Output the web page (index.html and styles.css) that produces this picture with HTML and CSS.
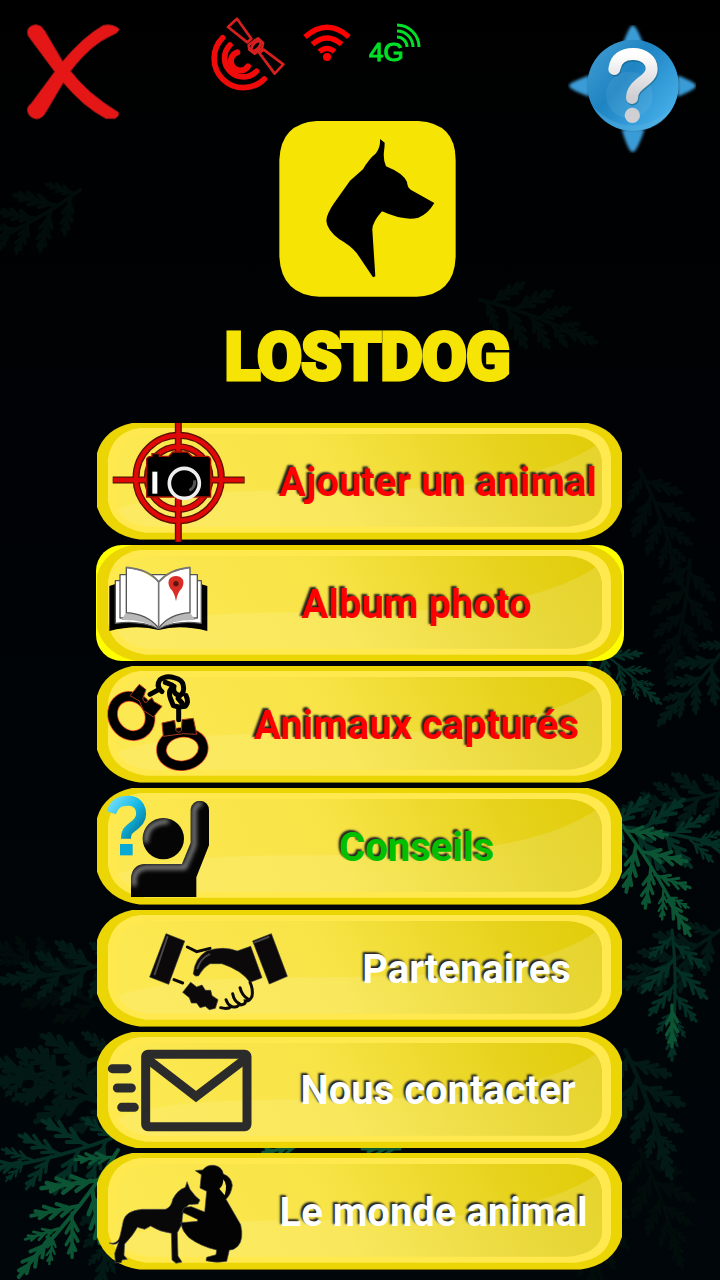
FILE: index.html
```html
<!DOCTYPE html>
<html lang="fr">
<head>
<meta charset="utf-8">
<meta name="viewport" content="width=device-width, initial-scale=1">
<title>LostDog</title>
<link rel="stylesheet" href="styles.css">
</head>
<body>
<svg class="foliage" viewBox="0 0 720 1280" preserveAspectRatio="xMidYMid slice" aria-hidden="true">
  <defs>
    <g id="twig"><path d="M0 0V38M0 8l-5 9M0 6l5 9M0 18l-5 9M0 15l5 9M0 27l-3 7M0 25l3 7"/></g>
    <g id="frond">
      <path d="M0 0Q6 50 0 110"/>
      <use href="#twig" transform="translate(1 6) rotate(48) scale(.8)"/>
      <use href="#twig" transform="translate(1 12) rotate(-52)"/>
      <use href="#twig" transform="translate(2 28) rotate(44) scale(1.15)"/>
      <use href="#twig" transform="translate(3 36) rotate(-46) scale(1.1)"/>
      <use href="#twig" transform="translate(3 52) rotate(40)"/>
      <use href="#twig" transform="translate(2 60) rotate(-38) scale(.9)"/>
      <use href="#twig" transform="translate(1 76) rotate(34) scale(.7)"/>
      <use href="#twig" transform="translate(1 82) rotate(-30) scale(.6)"/>
      <use href="#twig" transform="translate(0 86)"/>
    </g>
  </defs>
  <g fill="none" stroke-width="4" stroke-linecap="round">
    <g stroke="#010c0b">
      <use href="#frond" transform="translate(80 190) rotate(60)"/>
      <use href="#frond" transform="translate(480 300) rotate(-70)"/>
      <use href="#frond" transform="translate(640 470) rotate(-20)"/>
      <use href="#frond" transform="translate(690 560) rotate(10)"/>
      <use href="#frond" transform="translate(110 1010) rotate(120) scale(1.2)"/>
      <use href="#frond" transform="translate(640 1150) rotate(-20)"/>
      <use href="#frond" transform="translate(600 1180) rotate(5)"/>
    </g>
    <g stroke="#021915">
      <use href="#frond" transform="translate(730 640) rotate(40) scale(.9)"/>
      <use href="#frond" transform="translate(730 790) rotate(80) scale(.9)"/>
      <use href="#frond" transform="translate(120 960) rotate(80)"/>
      <use href="#frond" transform="translate(120 1050) rotate(75) scale(1.2)"/>
      <use href="#frond" transform="translate(130 1110) rotate(110) scale(1.3)"/>
      <use href="#frond" transform="translate(120 1170) rotate(10)"/>
      <use href="#frond" transform="translate(625 1050) rotate(-20) scale(1.1)"/>
      <use href="#frond" transform="translate(720 930) rotate(60)"/>
    </g>
    <g stroke="#042f25" stroke-width="3">
      <use href="#frond" transform="translate(585 640) rotate(-50) scale(.8)"/>
      <use href="#frond" transform="translate(600 825) rotate(-80) scale(1.2)"/>
      <use href="#frond" transform="translate(120 1135) rotate(75) scale(1.2)"/>
      <use href="#frond" transform="translate(672 930) rotate(0) scale(1.05)"/>
    </g>
    <g stroke="#0b5434" stroke-width="3">
      <use href="#frond" transform="translate(618 820) rotate(-32) scale(1.1)"/>
      <use href="#frond" transform="translate(118 1150) rotate(38) scale(1.3)"/>
      <use href="#twig" transform="translate(672 1005) scale(1.1)"/>
      <use href="#twig" transform="translate(300 1146) rotate(80)"/>
      <use href="#twig" transform="translate(400 1149) rotate(90)"/>
    </g>
  </g>
</svg>

<svg class="defs" aria-hidden="true">
  <defs>
    <linearGradient id="face" x1="0" y1=".1" x2="1" y2="0">
      <stop offset="0" stop-color="#fce850"/><stop offset=".4" stop-color="#f8e447"/>
      <stop offset=".85" stop-color="#e4d016"/><stop offset="1" stop-color="#e2cc08"/>
    </linearGradient>
    <linearGradient id="gloss" x1="0" x2="1">
      <stop offset="0" stop-color="#fff" stop-opacity=".1"/><stop offset="1" stop-color="#fff" stop-opacity=".14"/>
    </linearGradient>
    <linearGradient id="cyan" x1="0" y1="0" x2="1" y2="1">
      <stop offset="0" stop-color="#6fdcf8"/><stop offset=".5" stop-color="#12b9e4"/><stop offset="1" stop-color="#056c8c"/>
    </linearGradient>
    <filter id="soften"><feGaussianBlur stdDeviation="6"/></filter>
    <clipPath id="pupil"><circle cx="220" cy="164" r="62"/><path d="M123 339V282Q126 244 162 240H276L302 176V76Q306 50 332 50Q356 54 357 78V184L319 280V339Z"/></clipPath>
    <symbol id="plate" viewBox="0 0 528 117" preserveAspectRatio="none">
      <path d="M36 0H492Q520 6 526 30V84Q518 112 484 117H44Q10 112 1 84V30Q8 6 36 0Z" fill="#ecd504"/>
      <path d="M44 5H482Q514 9 515 36V82Q512 106 480 110H50Q16 105 12 78V36Q16 9 44 5Z" fill="#ffe94f"/>
      <path d="M50 11H472Q504 14 506 38V80Q504 101 472 104H54Q22 100 20 76V38Q24 14 50 11Z" fill="url(#face)"/>
      <path d="M22 86C90 62 190 70 310 66Q440 62 500 22Q506 28 506 38V80Q504 101 472 104H54Q28 102 22 86Z" fill="url(#gloss)"/>
    </symbol>
  </defs>
</svg>

<main class="screen">
  <header class="top">
    <button class="icon-button close" type="button" aria-label="Quitter">
      <svg width="98" height="100" viewBox="72 66 294 300">
        <path d="M82 96Q84 76 108 74Q124 74 134 92L188 184Q250 110 310 76Q340 70 358 88Q354 100 336 106Q272 134 212 213Q262 280 354 336Q362 346 344 356H318Q250 320 190 248L138 336Q126 358 108 357Q84 352 82 330Q82 318 94 310L164 215L92 118Q82 108 82 96Z" fill="#e41616" stroke="#8b1515" stroke-width="3"/>
      </svg>
    </button>
    <div class="brand">
      <div class="status">
        <svg width="75" height="76" viewBox="630 50 225 228" role="img" aria-label="Satellite">
          <g fill="none" stroke="#f00b0b" stroke-linecap="round">
            <path d="M668 112A82 82 0 1 0 793 236M690 134A53 53 0 1 0 770 213" stroke-width="17"/>
            <path d="M712 156A28 28 0 1 0 744 198" stroke-width="18"/>
            <g stroke="#d81f1f" stroke-width="8" stroke-linejoin="round"><path d="M684 80L711 55L754 115L742 126ZM778 158L791 148L850 192L824 220Z"/><path d="M748 148L746 134L774 114L789 128L786 142L764 160Z"/><ellipse cx="768" cy="137" rx="9" ry="18" transform="rotate(42 768 137)"/></g>
          </g>
        </svg>
        <svg class="signal" width="48" height="39" viewBox="908 70 144 117" role="img" aria-label="Wi-Fi">
          <g fill="none" stroke="#f00" stroke-width="16"><path d="M914 112Q980 54 1046 112M936 134Q980 96 1024 134M957 156Q980 137 1003 156"/></g>
          <circle cx="980" cy="172" r="12" fill="#f00"/>
        </svg>
        <svg class="signal" width="56" height="50" viewBox="0 0 56 50" role="img" aria-label="4G">
          <text class="network" x="0" y="38">4G</text>
          <g fill="none" stroke="#00e028" stroke-width="3"><path d="M28 2A22 22 0 0 1 50 24M28 8A16 16 0 0 1 44 24M28 14A10 10 0 0 1 38 24"/></g>
        </svg>
      </div>
      <svg class="tile" width="177" height="176" viewBox="207 33 531 528" aria-hidden="true">
        <path d="M320 33H625Q737 40 737 150V440Q733 554 620 560H328Q214 554 208 440V150Q212 40 320 33Z" fill="#f6e405"/>
        <path d="M510 87L524 98Q524 112 522 124Q519 150 528 169Q580 190 591 216Q592 232 602 239L673 279Q654 312 625 323Q582 334 516 304Q486 338 487 360L496 499L489 502L440 429Q420 406 388 388Q350 358 349 332Q350 312 372 280L420 212L459 178Q476 148 498 130Q512 110 510 87Z" fill="#000"/>
      </svg>
      <h1 class="wordmark">LOSTDOG</h1>
    </div>
    <button class="icon-button help" type="button" aria-label="Aide">
      <svg width="128" height="128" viewBox="81 75 384 384">
        <defs>
          <linearGradient id="orb" x1="0" y1="0" x2="1" y2=".8"><stop offset="0" stop-color="#459fd4"/><stop offset=".45" stop-color="#1e84c2"/><stop offset="1" stop-color="#48b2ec"/></linearGradient>
          <linearGradient id="mark" x1="0" y1="0" x2="0" y2="1"><stop offset="0" stop-color="#fff"/><stop offset="1" stop-color="#cdcdd2"/></linearGradient>
          <filter id="soft"><feGaussianBlur stdDeviation="4"/></filter>
        </defs>
        <path d="M246 130Q266 76 275 76Q286 76 306 130ZM410 226Q465 248 465 257Q465 268 410 290ZM145 226Q84 248 84 257Q84 268 145 290ZM242 388Q262 456 275 457Q288 456 311 388Z" fill="#3a9bd6" filter="url(#soft)"/>
        <circle cx="276" cy="256" r="137" fill="url(#orb)"/>
        <circle cx="265" cy="285" r="70" fill="#fff" opacity=".07"/>
        <path d="M155 320Q270 430 394 324Q360 392 276 393Q200 390 155 320Z" fill="#6bbbe8" opacity=".3"/>
        <path d="M222 211C226 180 248 166 278 166C312 166 334 186 334 210C334 248 276 252 275 298" fill="none" stroke="#033" stroke-width="37" stroke-linecap="round" opacity=".3"/>
        <path d="M220 207C224 176 246 162 276 162C310 162 332 182 332 206C332 244 274 248 273 294" fill="none" stroke="url(#mark)" stroke-width="36" stroke-linecap="round"/>
        <circle cx="274" cy="346" r="23" fill="#cfcfd4"/>
      </svg>
    </button>
  </header>

  <nav class="menu" aria-label="Menu principal">
    <button class="item danger" type="button">
      <svg class="plate"><use href="#plate"/></svg>
      <svg class="icon" width="145" height="101" viewBox="51 48 435 303" aria-hidden="true">
        <g fill="none" stroke="#5c1000" stroke-width="21"><circle cx="266" cy="189" r="128"/><circle cx="266" cy="189" r="94"/><path d="M68 195H464M265 24V380"/></g>
        <g fill="none" stroke="#e00808" stroke-width="13"><circle cx="266" cy="189" r="128"/><circle cx="266" cy="189" r="94"/><path d="M70 195H462M265 24V380"/></g>
        <path d="M170 132Q172 124 186 124V116H208V124H236L248 111H292L306 124H352Q362 126 362 136V246H170Z" fill="#000" stroke="#a81200" stroke-width="4"/>
        <path d="M187 170H202V236H187Z" fill="#fff"/>
        <circle cx="283" cy="205" r="45" fill="#000" stroke="#eee" stroke-width="11"/>
        <path d="M314 196Q316 218 298 226" fill="none" stroke="#555" stroke-width="9"/>
      </svg>
      <span class="label">Ajouter un animal</span>
    </button>
    <button class="item danger selected" type="button" aria-current="true">
      <svg class="plate"><use href="#plate"/></svg>
      <svg class="icon" width="102" height="101" viewBox="51 39 306 303" aria-hidden="true">
        <path d="M58 138L76 132V248H332V132L352 138V273Q270 252 206 270Q140 252 58 273Z" fill="#000"/>
        <g fill="#fff" stroke="#555" stroke-width="4" stroke-linejoin="round">
          <path d="M76 122H334V250Q260 240 206 266Q150 240 76 250Z"/>
          <path d="M90 104H322V234Q250 232 206 266Q160 230 90 234Z"/>
        </g>
        <path d="M109 216Q172 222 206 264Q238 222 300 218L316 240Q250 238 206 266Q160 238 94 240Z" fill="#b9b9b9"/>
        <path d="M109 82Q176 88 206 126Q238 88 300 82V218Q238 222 206 264Q172 222 109 218Z" fill="#fff" stroke="#555" stroke-width="4" stroke-linejoin="round"/>
        <path d="M109 66L206 124L300 66V81Q238 88 206 125Q176 88 109 81Z" fill="#fae64e"/>
        <path d="M109 82Q176 88 206 126Q238 88 300 82M206 126V264" fill="none" stroke="#777" stroke-width="5"/>
        <path d="M258 184Q254 158 240 144C228 120 242 108 258 108S288 120 276 144Q262 158 258 184Z" fill="#d92c24"/><circle cx="258" cy="131" r="8" fill="#5b1512"/>
      </svg>
      <span class="label">Album photo</span>
    </button>
    <button class="item danger" type="button">
      <svg class="plate"><use href="#plate"/></svg>
      <svg class="icon" width="102" height="101" viewBox="51 37 306 303" aria-hidden="true">
        <g fill="none" stroke="#e2512a" stroke-width="32">
          <ellipse cx="124" cy="163" rx="54" ry="61" transform="rotate(-35 124 163)"/><ellipse cx="277" cy="262" rx="63" ry="50" transform="rotate(-8 277 262)"/>
        </g>
        <g fill="none" stroke="#000" stroke-width="27">
          <ellipse cx="124" cy="163" rx="54" ry="61" transform="rotate(-35 124 163)"/><ellipse cx="277" cy="262" rx="63" ry="50" transform="rotate(-8 277 262)"/>
        </g>
        <g fill="#000" stroke="#a53a1c" stroke-width="3" stroke-linejoin="round">
          <path d="M120 102L148 68L168 84L158 112L166 124L186 108L192 120L216 134L190 166L160 146L148 118Z"/>
          <path d="M216 184L254 176L258 206Q266 218 274 206L276 174L310 170L320 218L280 216L220 224Z"/>
        </g>
        <path id="chain" d="M180 98L202 86M216 90Q196 72 210 54Q228 40 252 48Q278 54 280 72Q284 92 270 102Q246 96 252 74M226 62L246 70M244 80Q234 92 242 112L250 132L266 136L286 134Q298 122 288 102M264 110L276 124M266 142V174" fill="none" stroke="#000" stroke-width="15" stroke-linecap="round" stroke-linejoin="round"/>
      </svg>
      <span class="label">Animaux capturés</span>
    </button>
    <button class="item success" type="button">
      <svg class="plate"><use href="#plate"/></svg>
      <svg class="icon" width="102" height="101" viewBox="51 36 306 303" aria-hidden="true">
        <path d="M64 86C76 48 104 50 120 50C156 54 164 98 138 120C114 138 108 142 108 164" fill="none" stroke="url(#cyan)" stroke-width="30"/>
        <path d="M90 180H128V214H90Z" fill="#08a9d4"/>
        <g clip-path="url(#pupil)">
          <path d="M100 30H370V350H100Z" fill="#050505"/>
          <g fill="none" stroke="#808080" stroke-width="14" filter="url(#soften)"><path d="M168 176Q164 114 236 112M132 306V282Q136 254 168 250H284L312 184V78Q318 58 336 60"/></g>
        </g>
      </svg>
      <span class="label">Conseils</span>
    </button>
    <button class="item" type="button">
      <svg class="plate"><use href="#plate"/></svg>
      <svg class="icon" width="202" height="101" viewBox="51 37 606 303" aria-hidden="true">
        <g fill="#0c090a" stroke="#333" stroke-width="2">
          <path d="M228 84L284 106L236 236L179 214ZM488 106L544 84L592 212L538 235Z"/>
          <path d="M310 204Q314 158 350 136Q400 120 442 136L482 122L516 216L480 230Q456 194 396 174H360Q340 184 326 210Q314 214 310 204Z"/>
          <path d="M278 260L302 230L320 244L336 238L346 254L362 254L366 270L384 282L376 308L358 312L346 302L330 306L320 292L304 292L298 276Z"/>
        </g>
        <g fill="none" stroke="#0c090a" stroke-width="9" stroke-linecap="round"><path d="M292 124L320 138L360 128M252 222L278 232M480 230Q490 250 486 272Q478 288 466 286Q468 298 446 298Q440 308 424 302Q414 312 392 306M450 246Q456 270 474 280M428 264Q432 286 448 294M408 282Q412 296 424 302"/></g>
        <path d="M232 94L194 206M494 110L536 94M322 188Q332 158 358 146" fill="none" stroke="#4a4648" stroke-width="6" stroke-linecap="round"/>
      </svg>
      <span class="label">Partenaires</span>
    </button>
    <button class="item" type="button">
      <svg class="plate"><use href="#plate"/></svg>
      <svg class="icon" width="145" height="101" viewBox="51 33 435 303" aria-hidden="true">
        <g fill="none" stroke="#2b2b2b" stroke-width="27"><rect x="167" y="79" width="304" height="217" rx="7"/><path d="M176 96L318 206L462 96"/><path d="M67 122H111M82 180H124M95 238H133" stroke-linecap="round"/></g>
      </svg>
      <span class="label">Nous contacter</span>
    </button>
    <button class="item" type="button">
      <svg class="plate"><use href="#plate"/></svg>
      <svg class="icon" width="136" height="101" viewBox="51 33 408 303" aria-hidden="true">
        <path d="M57 279Q84 284 90 258Q96 232 100 212Q108 182 156 178H226Q244 172 248 148Q262 120 286 112L291 95L300 118L316 138L330 150L324 162L296 164L284 176Q276 192 276 222L262 248L264 318L276 336L258 340L246 330L244 250Q210 246 182 228L164 238L142 232Q130 256 104 282L102 316L112 328L96 330L94 338L76 338L74 310L86 276Q76 288 57 279Z" fill="#080808" stroke="#555" stroke-width="2"/>
        <path d="M316 62Q328 60 338 60Q350 44 372 46Q396 50 400 72Q424 80 427 106Q424 132 408 148L452 224Q462 268 444 288Q430 302 418 300L410 334Q380 340 348 332L350 322L378 314L380 300Q334 290 298 264Q276 244 272 218L322 214Q326 208 318 206L276 186L284 172L304 170L344 186L350 124L330 114L334 74Z" fill="#030303" stroke="#444" stroke-width="2"/>
        <path d="M400 88Q414 104 404 136L388 116Q400 108 400 88Z" fill="#f8e650"/>
      </svg>
      <span class="label">Le monde animal</span>
    </button>
  </nav>
</main>
</body>
</html>
```

FILE: styles.css
```css
* {
  box-sizing: border-box;
}

body {
  margin: 0;
  background: linear-gradient(#000 0, #000204 25%, #00060a 100%);
  font-family: Roboto, "Liberation Sans", sans-serif;
}

.foliage {
  position: absolute;
  inset: 0;
  width: 100%;
  height: 100%;
  z-index: -1;
}

.defs {
  position: absolute;
  width: 0;
  height: 0;
}

.screen {
  display: flex;
  flex-direction: column;
  min-height: 100vh;
  padding-bottom: 10px;
}

.top {
  display: grid;
  grid-template-columns: 143px 1fr 128px;
  align-items: start;
  padding: 17px 24px 0;
}

.icon-button {
  display: flex;
  padding: 0;
  border: 0;
  background: none;
  cursor: pointer;
}

.close {
  padding-top: 5px;
}

.help {
  padding-top: 8px;
}

.brand {
  display: flex;
  flex-direction: column;
  align-items: center;
}

.status {
  display: flex;
  align-self: stretch;
  gap: 18px;
  padding-left: 43px;
}

.signal {
  margin-top: 6px;
}

.network {
  font: 26px "Liberation Sans", sans-serif;
  fill: #00e028;
  stroke: #00e028;
  stroke-width: 1px;
}

.tile {
  margin-top: 28px;
}

.wordmark {
  margin: 24px 0 0;
  font: bold 64px/74px "Liberation Sans Narrow", Roboto, sans-serif;
  color: #f6e405;
  -webkit-text-stroke: 5px #f6e405;
}

.menu {
  flex: 1;
  display: grid;
  grid-auto-rows: 1fr;
  gap: 5px;
  margin-top: 28px;
  padding: 0 96px;
}

.item {
  position: relative;
  display: flex;
  align-items: center;
  min-height: 110px;
  padding: 0 0 0 11px;
  border: 0;
  background: none;
  color: #fff;
  font: bold 40px/48px Roboto, "Liberation Sans", sans-serif;
  text-shadow: -2px -2px 2px #222;
  cursor: pointer;
}

.danger {
  color: #f00;
}

.success {
  color: #00c000;
}

.selected {
  border-radius: 26px;
  background: #ff0;
}

.plate {
  position: absolute;
  inset: 0;
  width: 100%;
  height: 100%;
}

.icon {
  position: relative;
  flex: none;
  overflow: visible;
}

.label {
  position: relative;
  flex: 1;
  padding-top: 3px;
  text-align: center;
  white-space: nowrap;
}
```
